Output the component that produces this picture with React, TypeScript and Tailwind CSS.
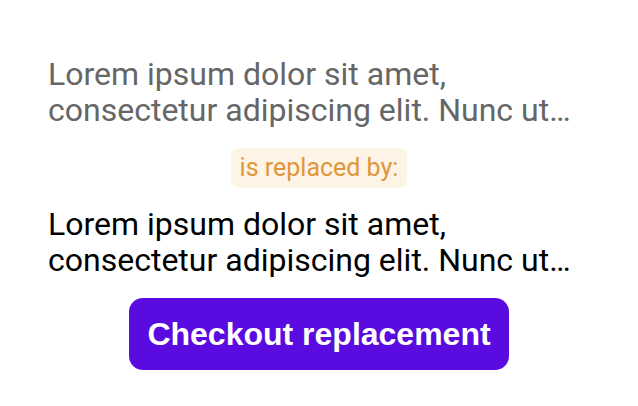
import React from "react";

const text =
  "Lorem ipsum dolor sit amet, consectetur adipiscing elit. Nunc ut tincidunt lorem, vel pretium nisi. Sed a lacus vitae erat dapibus dictum.";

const App = () => {
  return (
    <div className="w-[638px] h-[406px] bg-white flex flex-col items-center px-12 pt-[56px] font-['Roboto',sans-serif]">
      <p className="w-full text-[32px] leading-[36px] text-[#666666] line-clamp-2">
        {text}
      </p>

      <span className="mt-[20px] px-[9px] h-[40px] flex items-center rounded-lg bg-[#fdf4e6] text-[25px] text-[#e0963a]">
        is replaced by:
      </span>

      <p className="mt-[18px] w-full text-[32px] leading-[36px] text-black line-clamp-2">
        {text}
      </p>

      <button className="mt-[20px] w-[380px] h-[72px] rounded-[14px] bg-[#5a0ce0] text-white text-[32px] font-bold font-['Liberation_Sans',Arial,sans-serif]">
        Checkout replacement
      </button>
    </div>
  );
};

export default App;
